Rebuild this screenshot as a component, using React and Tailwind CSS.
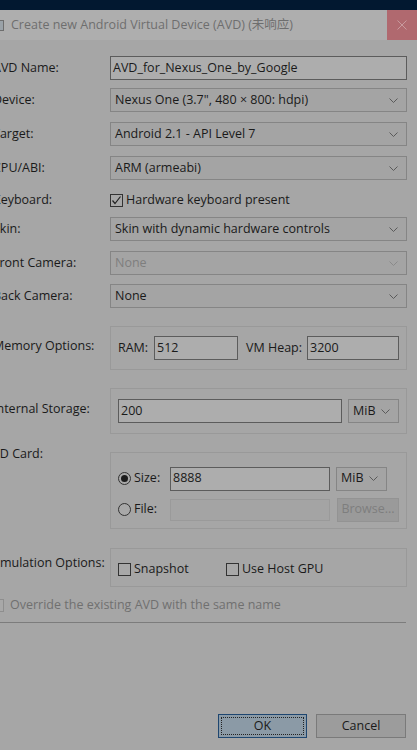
import React from 'react';

const font = { fontFamily: '"Open Sans", "Noto Sans CJK SC", sans-serif' };

const labelClass = "w-[117px] -ml-[7px] shrink-0 text-[12.5px] text-[#1a1a1a] whitespace-nowrap";
const inputClass = "h-[24px] bg-[#adadad] border border-[#5c5c5c] px-[2px] flex items-center text-[12.5px] text-[#1a1a1a]";
const selectClass = "h-[24px] bg-[#a4a4a4] border border-[#858585] pl-[4px] pr-[8px] flex items-center justify-between text-[12.5px] text-[#1a1a1a]";
const groupClass = "w-[297px] border border-[#999999] flex";

function Chevron({ color = "#5a5a5a" }) {
    return (
        <svg width="9" height="5" viewBox="0 0 9 5" className="shrink-0">
            <polyline points="0.5,0.5 4.5,4.5 8.5,0.5" fill="none" stroke={color} strokeWidth="1" />
        </svg>
    );
}

function Select({ value, className = "", disabled }) {
    return (
        <div className={`${selectClass} ${className} ${disabled ? "bg-[#9d9d9d] border-[#9a9a9a]" : ""}`}>
            <span className={disabled ? "text-[#7e7e7e]" : ""}>{value}</span>
            <Chevron color={disabled ? "#8a8a8a" : "#5a5a5a"} />
        </div>
    );
}

function Check({ checked, disabled }) {
    return (
        <div className={`w-[13px] h-[13px] border ${disabled ? "border-[#8e8e8e]" : "border-[#333333]"} bg-[#a8a8a8] shrink-0 flex items-center justify-center`}>
            {checked && (
                <svg width="11" height="11" viewBox="0 0 11 11">
                    <polyline points="1.5,5.5 4,8.5 9.5,1.5" fill="none" stroke="#222" strokeWidth="1.2" />
                </svg>
            )}
        </div>
    );
}

function Radio({ checked }) {
    return (
        <div className="w-[13px] h-[13px] rounded-full border border-[#333333] bg-[#a8a8a8] shrink-0 flex items-center justify-center">
            {checked && <div className="w-[7px] h-[7px] rounded-full bg-[#1c1c1c]" />}
        </div>
    );
}

function Row({ label, children, className = "" }) {
    return (
        <div className={`flex items-center h-[24px] ${className}`}>
            <div className={labelClass}>{label}</div>
            <div className="w-[297px]">{children}</div>
        </div>
    );
}

export default function App() {
    return (
        <div style={font} className="w-[417px] h-[750px] bg-[#a6a6a6] overflow-hidden flex flex-col">
            <div className="h-[10px] bg-[#021830] shrink-0" />
            <div className="h-[30px] bg-[#aeaeae] flex items-center shrink-0">
                <div className="w-[4px] h-[11px] border border-l-0 border-[#6e6e6e] bg-[#9aa2a8] mr-[7px]" />
                <span className="text-[12.5px] text-[#6e6e6e] flex-1 whitespace-nowrap">Create new Android Virtual Device (AVD) (未响应)</span>
                <div className="w-[30px] h-[30px] bg-[#b0696f] flex items-center justify-center">
                    <svg width="10" height="10" viewBox="0 0 10 10">
                        <path d="M0.5 0.5 L9.5 9.5 M9.5 0.5 L0.5 9.5" stroke="#c89a9e" strokeWidth="1" />
                    </svg>
                </div>
            </div>

            <div className="flex flex-col">
                <Row label="AVD Name:" className="mt-[16px]">
                    <div className={inputClass}>AVD_for_Nexus_One_by_Google</div>
                </Row>
                <Row label="Device:" className="mt-[8px]">
                    <Select value={'Nexus One (3.7", 480 × 800: hdpi)'} />
                </Row>
                <Row label="Target:" className="mt-[10px]">
                    <Select value="Android 2.1 - API Level 7" />
                </Row>
                <Row label="CPU/ABI:" className="mt-[10px]">
                    <Select value="ARM (armeabi)" />
                </Row>
                <div className="flex items-center h-[16px] mt-[12px]">
                    <div className={labelClass}>Keyboard:</div>
                    <div className="flex items-center gap-[3px] text-[12.5px] text-[#1a1a1a]">
                        <Check checked />
                        <span>Hardware keyboard present</span>
                    </div>
                </div>
                <Row label="Skin:" className="mt-[9px]">
                    <Select value="Skin with dynamic hardware controls" />
                </Row>
                <Row label="Front Camera:" className="mt-[10px]">
                    <Select value="None" disabled />
                </Row>
                <Row label="Back Camera:" className="mt-[9px]">
                    <Select value="None" />
                </Row>

                <div className="flex items-center mt-[18px]">
                    <div className={`${labelClass} -mt-[4px]`}>Memory Options:</div>
                    <div className={`${groupClass} h-[44px] items-center pl-[7px] text-[12.5px] text-[#1a1a1a]`}>
                        <span className="w-[36px]">RAM:</span>
                        <div className={`${inputClass} w-[84px] h-[22px]`}>512</div>
                        <span className="ml-[8px] w-[61px]">VM Heap:</span>
                        <div className={`${inputClass} w-[92px] h-[22px]`}>3200</div>
                    </div>
                </div>

                <div className="flex items-center mt-[18px]">
                    <div className={`${labelClass} -mt-[4px]`}>Internal Storage:</div>
                    <div className={`${groupClass} h-[46px] items-center pl-[7px] gap-[6px]`}>
                        <div className={`${inputClass} w-[224px] h-[23px]`}>200</div>
                        <Select value="MiB" className="w-[51px]" />
                    </div>
                </div>

                <div className="flex items-start mt-[18px]">
                    <div className={`${labelClass} -mt-[7px]`}>SD Card:</div>
                    <div className={`${groupClass} h-[77px] flex-col pl-[7px] pt-[14px] gap-[8px]`}>
                        <div className="flex items-center h-[23px] text-[12.5px] text-[#1a1a1a]">
                            <Radio checked />
                            <span className="ml-[3px] w-[36px]">Size:</span>
                            <div className={`${inputClass} w-[160px] h-[23px]`}>8888</div>
                            <Select value="MiB" className="w-[51px] ml-[6px]" />
                        </div>
                        <div className="flex items-center h-[23px] text-[12.5px] text-[#1a1a1a]">
                            <Radio />
                            <span className="ml-[3px] w-[36px]">File:</span>
                            <div className="w-[160px] h-[22px] bg-[#a4a4a4] border border-[#9a9a9a]" />
                            <div className="w-[62px] h-[24px] ml-[7px] bg-[#9a9a9a] border border-[#939393] flex items-center justify-center text-[12.5px] text-[#7e7e7e]">Browse...</div>
                        </div>
                    </div>
                </div>

                <div className="flex items-center mt-[19px]">
                    <div className={`${labelClass} -mt-[8px]`}>Emulation Options:</div>
                    <div className={`${groupClass} h-[39px] items-center pl-[7px] pt-[4px] text-[12.5px] text-[#1a1a1a]`}>
                        <Check />
                        <span className="ml-[3px] w-[92px]">Snapshot</span>
                        <Check />
                        <span className="ml-[3px]">Use Host GPU</span>
                    </div>
                </div>

                <div className="flex items-center gap-[6px] mt-[11px] -ml-[9px] h-[14px] text-[12.5px] text-[#707070]">
                    <Check disabled />
                    <span>Override the existing AVD with the same name</span>
                </div>

                <div className="w-[406px] h-px bg-[#7c7c7c] mt-[10px]" />
            </div>

            <div className="flex justify-end gap-[9px] mt-auto mb-[12px] pr-[11px]">
                <div className="w-[89px] h-[24px] border border-[#1e4670] bg-[#8b9aa6] p-[2px]">
                    <div className="w-full h-full border border-dotted border-[#222] flex items-center justify-center text-[12.5px] text-[#1a1a1a]">OK</div>
                </div>
                <div className="w-[90px] h-[24px] border border-[#7a7a7a] bg-[#9c9c9c] flex items-center justify-center text-[12.5px] text-[#1a1a1a]">Cancel</div>
            </div>
        </div>
    );
}
